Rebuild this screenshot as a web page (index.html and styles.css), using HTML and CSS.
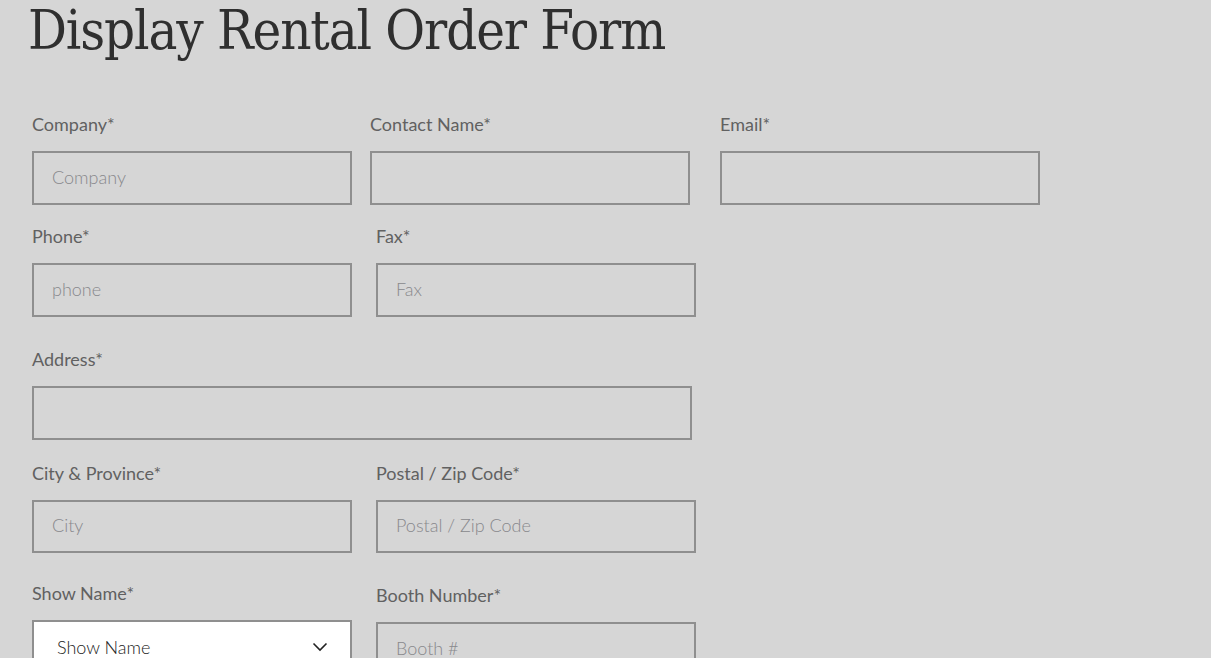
FILE: index.html
```html
<!DOCTYPE html>
<html lang="en">
<head>
<meta charset="utf-8">
<title>Display Rental Order Form</title>
<link rel="stylesheet" href="styles.css">
</head>
<body>
<main class="page">
  <h1 class="title">Display Rental Order Form</h1>
  <form class="form">
    <div class="row row-1">
      <div class="field"><label class="label">Company*</label><input class="input" placeholder="Company"></div>
      <div class="field"><label class="label">Contact Name*</label><input class="input"></div>
      <div class="field field-email"><label class="label">Email*</label><input class="input"></div>
    </div>
    <div class="row row-2">
      <div class="field"><label class="label">Phone*</label><input class="input" placeholder="phone"></div>
      <div class="field"><label class="label">Fax*</label><input class="input" placeholder="Fax"></div>
    </div>
    <div class="row row-3">
      <div class="field"><label class="label">Address*</label><input class="input"></div>
    </div>
    <div class="row row-4">
      <div class="field"><label class="label">City &amp; Province*</label><input class="input input-short" placeholder="City"></div>
      <div class="field"><label class="label">Postal / Zip Code*</label><input class="input input-short" placeholder="Postal / Zip Code"></div>
    </div>
    <div class="row row-5">
      <div class="field"><label class="label">Show Name*</label>
        <div class="select"><span>Show Name</span>
          <svg class="chev" width="16" height="10" viewBox="0 0 16 10"><path d="M1.5 1.5 L8 8 L14.5 1.5" fill="none" stroke="#222" stroke-width="1.6"/></svg>
        </div>
      </div>
      <div class="field field-booth"><label class="label">Booth Number*</label><input class="input" placeholder="Booth #"></div>
    </div>
  </form>
</main>
</body>
</html>
```

FILE: styles.css
```css
* { box-sizing: border-box; }
html, body { margin: 0; padding: 0; background: #d6d6d6; height: 100%; overflow: hidden; }
.page { padding-left: 32px; }
.title {
  margin: 0 0 0 -4px;
  padding-top: 4px;
  font-family: "DejaVu Serif Condensed", "DejaVu Serif", serif;
  font-weight: 400;
  font-size: 54px;
  line-height: 54px;
  letter-spacing: -1.1px;
  color: #2f2f2f;
  height: 113px;
}
.form { display: flex; flex-direction: column; }
.row { display: grid; }
.row-1 { grid-template-columns: 320px 320px 332px; column-gap: 18px; }
.field-email { padding-left: 12px; }
.row-2, .row-4, .row-5 { grid-template-columns: 320px 320px; column-gap: 24px; }
.row-2 { margin-top: 20px; }
.row-3 { grid-template-columns: 660px; margin-top: 31px; }
.row-4 { margin-top: 22px; }
.row-5 { margin-top: 29px; }
.field { display: flex; flex-direction: column; }
.field-booth { padding-top: 2px; }
.label {
  font-family: "Lato", "Open Sans", sans-serif;
  font-size: 18px;
  line-height: 22px;
  color: #616161;
  margin-bottom: 16px;
}
.input {
  display: block;
  width: 100%;
  height: 54px;
  border: 2px solid #8f8f8f;
  background: transparent;
  padding: 0 18px 3px;
  font-family: "Lato", "Open Sans", sans-serif;
  font-weight: 300;
  font-size: 18px;
  color: #333;
  outline: none;
}
.input-short { height: 53px; }
.input::placeholder { color: #88888c; opacity: 1; }
.select {
  height: 54px;
  border: 2px solid #8f8f8f;
  background: #ffffff;
  display: flex;
  align-items: center;
  justify-content: space-between;
  padding: 0 22px 0 23px;
  font-family: "Lato", "Open Sans", sans-serif;
  font-weight: 300;
  font-size: 18px;
  color: #222;
}
```
